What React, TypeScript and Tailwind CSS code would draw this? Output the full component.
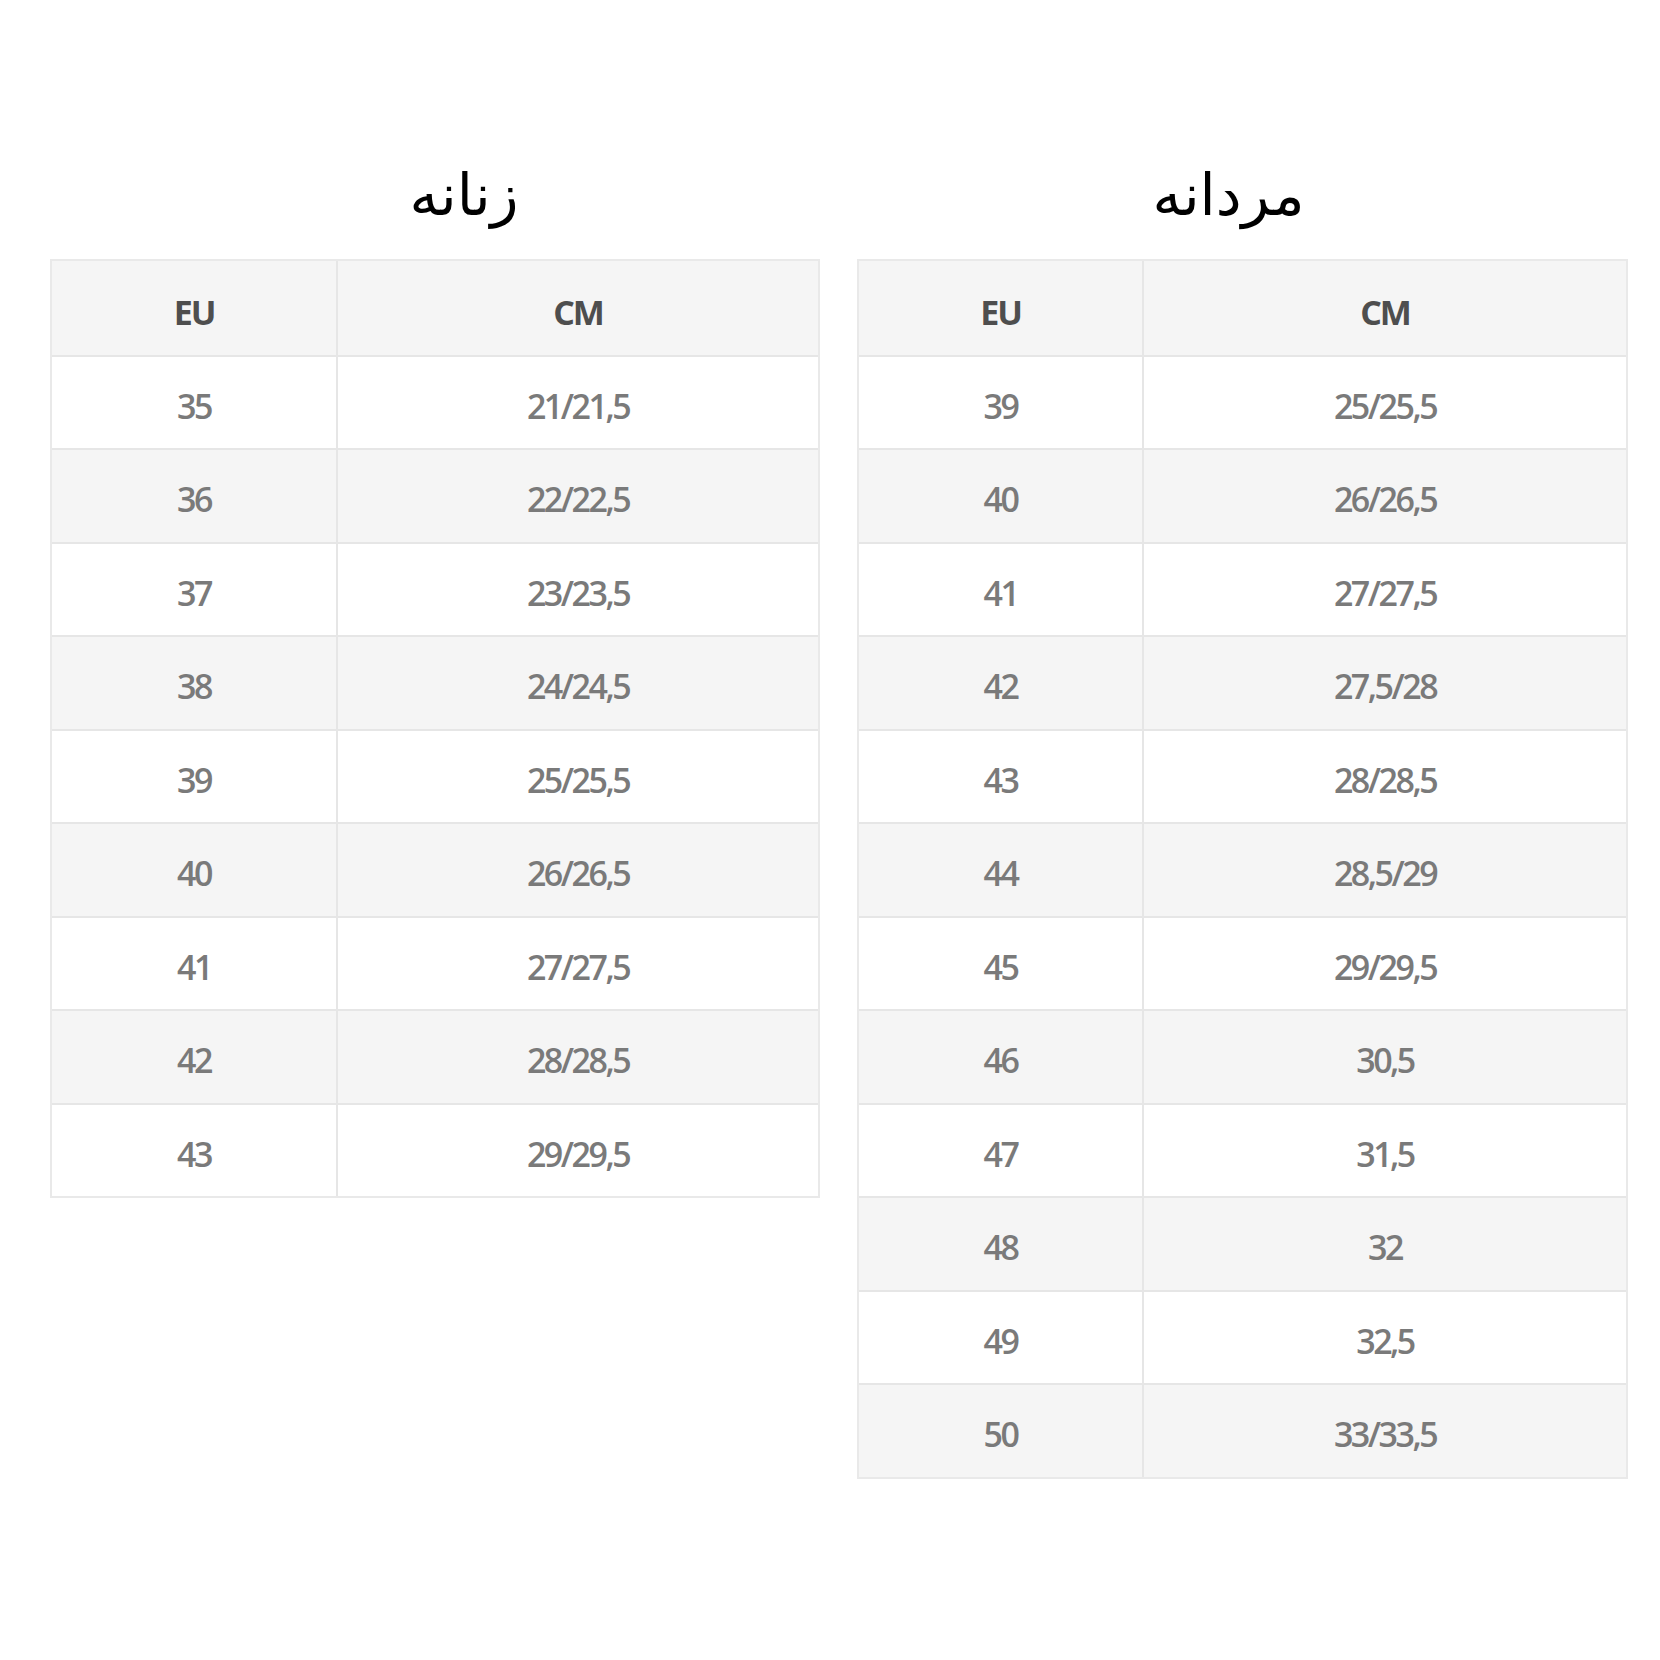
import React from "react";

const women: [string, string][] = [
  ["35", "21/21,5"],
  ["36", "22/22,5"],
  ["37", "23/23,5"],
  ["38", "24/24,5"],
  ["39", "25/25,5"],
  ["40", "26/26,5"],
  ["41", "27/27,5"],
  ["42", "28/28,5"],
  ["43", "29/29,5"],
];

const men: [string, string][] = [
  ["39", "25/25,5"],
  ["40", "26/26,5"],
  ["41", "27/27,5"],
  ["42", "27,5/28"],
  ["43", "28/28,5"],
  ["44", "28,5/29"],
  ["45", "29/29,5"],
  ["46", "30,5"],
  ["47", "31,5"],
  ["48", "32"],
  ["49", "32,5"],
  ["50", "33/33,5"],
];

function SizeTable({ rows, firstCol }: { rows: [string, string][]; firstCol: string }) {
  return (
    <div className="border-2 border-[#e9e9e9] font-['Open_Sans',sans-serif]">
      <div className={`grid ${firstCol} h-[93.5px] bg-[#f5f5f5]`}>
        <div className="flex items-center justify-center border-r-2 border-[#e6e6e6] pt-[10px] text-[34px] font-bold tracking-[-2px] text-[#4e4e4e]">
          EU
        </div>
        <div className="flex items-center justify-center pt-[10px] text-[34px] font-bold tracking-[-2px] text-[#4e4e4e]">
          CM
        </div>
      </div>
      {rows.map(([eu, cm], i) => (
        <div
          key={i}
          className={`grid ${firstCol} h-[93.5px] border-t-2 border-[#e6e6e6] ${
            i % 2 === 0 ? "bg-white" : "bg-[#f5f5f5]"
          }`}
        >
          <div className="flex items-center justify-center border-r-2 border-[#e6e6e6] pt-[8px] text-[34px] font-semibold tracking-[-2.5px] text-[#7a7a7a]">
            {eu}
          </div>
          <div className="flex items-center justify-center pt-[8px] text-[34px] font-semibold tracking-[-2.5px] text-[#7a7a7a]">
            {cm}
          </div>
        </div>
      ))}
    </div>
  );
}

export default function App() {
  return (
    <div className="w-[1660px] h-[1660px] bg-white">
      <div className="flex gap-[37px] pl-[50px]">
        <div className="flex w-[770px] flex-col">
          <div className="flex h-[259px] items-center justify-center pl-[58px] pt-[130px]">
            <span dir="rtl" className="font-['DejaVu_Sans',sans-serif] text-[58px] leading-none text-black">
              زنانه
            </span>
          </div>
          <SizeTable rows={women} firstCol="grid-cols-[286px_1fr]" />
        </div>
        <div className="flex w-[771px] flex-col">
          <div className="flex h-[259px] items-center justify-center pr-[28px] pt-[130px]">
            <span dir="rtl" className="font-['DejaVu_Sans',sans-serif] text-[58px] leading-none text-black">
              مردانه
            </span>
          </div>
          <SizeTable rows={men} firstCol="grid-cols-[285px_1fr]" />
        </div>
      </div>
    </div>
  );
}
